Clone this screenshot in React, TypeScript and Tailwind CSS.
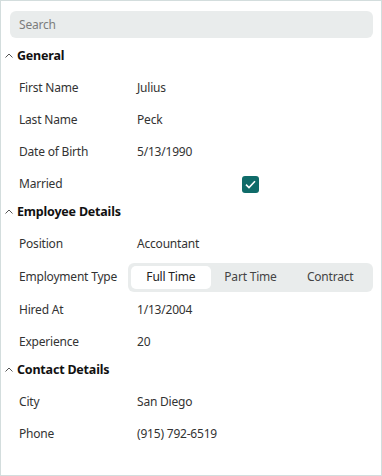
import { Fragment } from 'react';

type Row = { label: string; value?: string; kind?: 'check' | 'segment' };
type Section = { title: string; rows: Row[] };

const sections: Section[] = [
  {
    title: 'General',
    rows: [
      { label: 'First Name', value: 'Julius' },
      { label: 'Last Name', value: 'Peck' },
      { label: 'Date of Birth', value: '5/13/1990' },
      { label: 'Married', kind: 'check' },
    ],
  },
  {
    title: 'Employee Details',
    rows: [
      { label: 'Position', value: 'Accountant' },
      { label: 'Employment Type', kind: 'segment' },
      { label: 'Hired At', value: '1/13/2004' },
      { label: 'Experience', value: '20' },
    ],
  },
  {
    title: 'Contact Details',
    rows: [
      { label: 'City', value: 'San Diego' },
      { label: 'Phone', value: '(915) 792-6519' },
    ],
  },
];

function Chevron() {
  return (
    <svg width="8" height="5" viewBox="0 0 8 5" className="shrink-0 -mt-[2px]">
      <path d="M0.5 4.5 L4 1 L7.5 4.5" fill="none" stroke="#555" strokeWidth="1" />
    </svg>
  );
}

function CheckBox() {
  return (
    <div className="w-[17px] h-[17px] rounded-[3px] bg-[#0f6b69] flex items-center justify-center">
      <svg width="11" height="9" viewBox="0 0 11 9">
        <path d="M1 4.6 L4 7.5 L10 1.3" fill="none" stroke="#fff" strokeWidth="1.6" />
      </svg>
    </div>
  );
}

function Segmented() {
  const opts = ['Full Time', 'Part Time', 'Contract'];
  return (
    <div className="grid grid-cols-3 h-[29px] p-[3px] rounded-[6px] bg-[#e9ecec]">
      {opts.map((o, i) => (
        <div
          key={o}
          className={
            i === 0
              ? 'flex items-center justify-center rounded-[5px] bg-white text-[#222]'
              : 'flex items-center justify-center text-[#444]'
          }
        >
          {o}
        </div>
      ))}
    </div>
  );
}

export default function App() {
  return (
    <div
      className="w-[382px] h-[476px] border border-[#d3dddd] bg-white pt-[10px] pl-[9px] pr-[8px] text-[12px] tracking-[-0.2px] text-[#333] whitespace-nowrap"
      style={{ fontFamily: '"Segoe UI", "Noto Sans", sans-serif' }}
    >
      <div className="h-[27px] rounded-[6px] bg-[#e9ecec] flex items-center pl-[9px] text-[#7c7c7c]">
        Search
      </div>
      <div className="mt-[6px]">
        {sections.map((s) => (
          <Fragment key={s.title}>
            <div className="h-[24px] mb-[4px] flex items-center gap-[4px] -ml-[5px] font-bold text-[12.5px] text-[#111]">
              <Chevron />
              <span>{s.title}</span>
            </div>
            {s.rows.map((r) => (
              <div
                key={r.label}
                className={r.kind === 'segment' ? 'h-[34px] flex items-center' : 'h-[32px] flex items-center'}
              >
                <div className="w-[118px] shrink-0 pl-[9px]">{r.label}</div>
                <div className="flex-1">
                  {r.kind === 'check' ? (
                    <div className="flex justify-center">
                      <CheckBox />
                    </div>
                  ) : r.kind === 'segment' ? (
                    <Segmented />
                  ) : (
                    <div className="pl-[9px]">{r.value}</div>
                  )}
                </div>
              </div>
            ))}
          </Fragment>
        ))}
      </div>
    </div>
  );
}
